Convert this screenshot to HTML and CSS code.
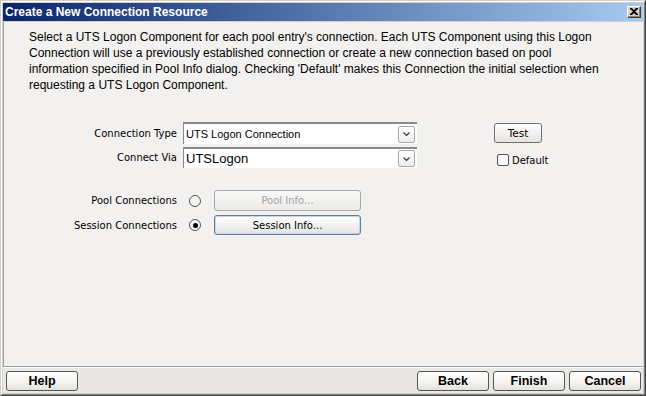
FILE: index.html
```html
<!DOCTYPE html>
<html>
<head>
<meta charset="utf-8">
<link rel="stylesheet" href="styles.css">
</head>
<body>
<div class="window">
  <div class="frame">
    <div class="titlebar">
      <span class="title">Create a New Connection Resource</span>
      <span class="close"><svg width="8" height="7" viewBox="0 0 8 7"><path d="M0 0h2l2 2 2-2h2v1L5 3.5 8 6v1H6L4 5 2 7H0V6l3-2.5L0 1z" fill="#000"/></svg></span>
    </div>
    <div class="body">
      <p class="desc">Select a UTS Logon Component for each pool entry's connection. Each UTS Component using this Logon<br>Connection will use a previously established connection or create a new connection based on pool<br>information specified in Pool Info dialog. Checking 'Default' makes this Connection the initial selection when<br>requesting a UTS Logon Component.</p>
      <div class="form">
        <div class="lbl">Connection Type</div>
        <div class="combo"><span class="combo-text small">UTS Logon Connection</span><span class="arrow"><svg width="7" height="4" viewBox="0 0 7 4"><path d="M0.5 0.5l3 3 3-3" fill="none" stroke="#333" stroke-width="1.1"/></svg></span></div>
        <div class="side"><button class="btn test">Test</button></div>

        <div class="lbl">Connect Via</div>
        <div class="combo"><span class="combo-text large">UTSLogon</span><span class="arrow"><svg width="7" height="4" viewBox="0 0 7 4"><path d="M0.5 0.5l3 3 3-3" fill="none" stroke="#333" stroke-width="1.1"/></svg></span></div>
        <div class="side"><label class="check"><span class="box"></span>Default</label></div>
      </div>
      <div class="form2">
        <div class="lbl">Pool Connections</div>
        <span class="radio"></span>
        <button class="btn wide disabled">Pool Info...</button>

        <div class="lbl">Session Connections</div>
        <span class="radio on"></span>
        <button class="btn wide focus">Session Info...</button>
      </div>
    </div>
    <div class="footer">
      <button class="btn nav">Help</button>
      <div class="spacer"></div>
      <button class="btn nav">Back</button>
      <button class="btn nav">Finish</button>
      <button class="btn nav">Cancel</button>
    </div>
  </div>
</div>
</body>
</html>
```
FILE: styles.css
```css
html, body {
  margin: 0;
  padding: 0;
  width: 646px;
  height: 396px;
  overflow: hidden;
  background: #d4d0c8;
}
.window {
  width: 646px;
  height: 396px;
  box-sizing: border-box;
  border: 1px solid;
  border-color: #d4d0c8 #404040 #404040 #d4d0c8;
}
.frame {
  height: 100%;
  box-sizing: border-box;
  border: 1px solid;
  border-color: #ffffff #808080 #808080 #ffffff;
  padding: 1px;
  display: flex;
  flex-direction: column;
  background: #d4d0c8;
}
.titlebar {
  height: 18px;
  flex: none;
  display: flex;
  align-items: center;
  justify-content: space-between;
  padding: 0 2px 0 2px;
  background: linear-gradient(to right, #0a246a, #a6caf0);
}
.title {
  font-family: "Liberation Sans", Arial, sans-serif;
  font-weight: bold;
  font-size: 12px;
  color: #ffffff;
}
.close {
  width: 14px;
  height: 12px;
  box-sizing: border-box;
  background: #d4d0c8;
  border: 1px solid;
  border-color: #ffffff #404040 #404040 #ffffff;
  box-shadow: inset -1px -1px 0 #808080;
  display: flex;
  align-items: center;
  justify-content: center;
  padding-bottom: 1px;
  padding-right: 1px;
}
.body {
  flex: 1;
  margin-top: 1px;
  background: #f2f1ef;
  border-left: 1px solid #a0a0a0;
  border-bottom: 1px solid #9c9c9c;
  padding: 7px 0 0 0;
  font-family: "DejaVu Sans", sans-serif;
  font-size: 10px;
  color: #000;
}
.desc {
  margin: 0 0 0 25px;
  font-family: "Liberation Sans", Arial, sans-serif;
  font-size: 12px;
  line-height: 16px;
  white-space: nowrap;
  color: #000;
}
.form {
  margin-top: 29px;
  display: grid;
  grid-template-columns: 173px 234px auto;
  grid-template-rows: 22px 21px;
  column-gap: 6px;
  row-gap: 3px;
  align-items: center;
}
.lbl {
  text-align: right;
  white-space: nowrap;
  font-size: 10px;
}
.combo {
  height: 100%;
  box-sizing: border-box;
  background: #ffffff;
  border-top: 2px solid #8a8a8a;
  border-left: 1px solid #8a8a8a;
  display: flex;
  align-items: center;
  justify-content: space-between;
  padding: 0 2px 0 2px;
}
.combo-text {
  font-family: "Liberation Sans", Arial, sans-serif;
  color: #000;
}
.combo-text.small { font-size: 11px; }
.combo-text.large { font-size: 13px; }
.arrow {
  width: 17px;
  height: 17px;
  box-sizing: border-box;
  border: 1px solid #a8a8a8;
  border-radius: 2px;
  background: linear-gradient(#ffffff, #ececec);
  display: flex;
  align-items: center;
  justify-content: center;
}
.side {
  padding-left: 71px;
  display: flex;
  align-items: center;
}
.btn {
  box-sizing: border-box;
  margin: 0;
  padding: 0;
  border: 1px solid #6f6f6f;
  border-radius: 3px;
  background: linear-gradient(#ffffff, #f0efed 60%, #e4e3e0);
  font-family: "DejaVu Sans", sans-serif;
  font-size: 10px;
  color: #000;
  text-align: center;
}
.test {
  width: 48px;
  height: 20px;
  font-size: 10.5px;
}
.check {
  display: flex;
  align-items: center;
  margin-top: 5px;
  margin-left: 3px;
  gap: 3px;
}
.box {
  width: 12px;
  height: 12px;
  box-sizing: border-box;
  border: 1px solid #555555;
  border-radius: 2px;
  background: #f7f7f5;
}
.form2 {
  margin-top: 22px;
  display: grid;
  grid-template-columns: 173px 37px 147px;
  grid-template-rows: 21px 20px;
  row-gap: 4px;
  align-items: center;
}
.radio {
  justify-self: start;
  margin-left: 12px;
  width: 12px;
  height: 12px;
  box-sizing: border-box;
  border: 1px solid #555555;
  border-radius: 50%;
  background: #f5f5f3;
  position: relative;
}
.radio.on::after {
  content: "";
  position: absolute;
  left: 2.5px;
  top: 2.5px;
  width: 5px;
  height: 5px;
  border-radius: 50%;
  background: #000;
}
.wide {
  width: 147px;
  height: 100%;
}
.disabled {
  border-color: #a8a8a8;
  color: #a4a4a4;
  background: linear-gradient(#f7f7f6, #ecebe9);
}
.focus {
  border-color: #6a7a98;
  box-shadow: inset 0 0 0 1px #c6d4ea;
}
.footer {
  flex: none;
  height: 26px;
  box-sizing: border-box;
  background: #eae8e4;
  border-top: 1px solid #ffffff;
  display: flex;
  align-items: flex-start;
  padding: 3px 2px 0 3px;
  gap: 4px;
}
.spacer { flex: 1; }
.nav {
  width: 72px;
  height: 20px;
  font-family: "Liberation Sans", Arial, sans-serif;
  font-weight: bold;
  font-size: 12.5px;
  border-color: #555555;
  background: linear-gradient(#ffffff, #f3f2f0 60%, #e2e1de);
}
```
